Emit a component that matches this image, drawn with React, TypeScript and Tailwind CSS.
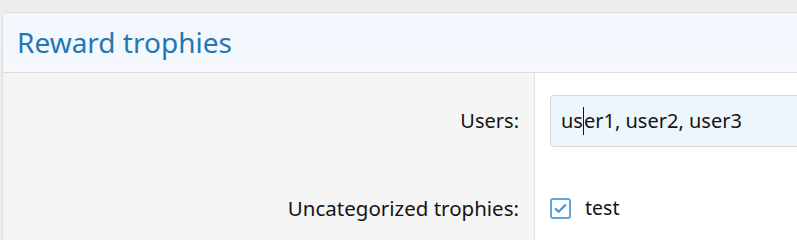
import React from 'react';

export default function App() {
  return (
    <div className="h-[240px] w-[797px] overflow-hidden bg-[#eeeeee] pt-3 pl-[2px] font-['Noto_Sans',sans-serif]">
      <div className="w-[820px] h-[260px] rounded-tl-[4px] border border-[#dcdcdc] bg-white overflow-hidden flex flex-col">
        <div className="h-[60px] shrink-0 border-b border-[#dcdcdc] bg-gradient-to-b from-[#f0f7fd] to-[#f5f9fd] px-[14px] flex items-center">
          <h2 className="text-[28px] text-[#2577b1] leading-none pb-[2px]">Reward trophies</h2>
        </div>
        <div className="flex-1 flex flex-col text-[#141414]">
          <div className="flex">
            <div className="w-[532px] shrink-0 bg-[#f5f5f5] border-r border-[#e2e2e2] pt-[22px] pb-[10px] pr-[15px]">
              <div className="h-[52px] flex items-center justify-end text-[20px]">Users:</div>
            </div>
            <div className="flex-1 pl-[15px] pt-[22px] pb-[10px]">
              <div className="h-[52px] rounded-[4px] border border-[#d8d8d8] bg-[#edf5fd] flex items-center pl-[10px] text-[20px]">
                <span>us</span>
                <span className="inline-block w-px h-[28px] bg-[#141414]"></span>
                <span>er1, user2, user3</span>
              </div>
            </div>
          </div>
          <div className="flex flex-1">
            <div className="w-[532px] shrink-0 bg-[#f5f5f5] border-r border-[#e2e2e2] pt-[38px] pr-[15px]">
              <div className="h-[26px] flex items-center justify-end text-[20.5px]">Uncategorized trophies:</div>
            </div>
            <div className="flex-1 pl-[15px] pt-[38px]">
              <div className="h-[26px] flex items-center gap-[14px] text-[19.5px]">
                <span className="w-[21px] h-[21px] rounded-[3px] border-2 border-[#5ea6d8] bg-white flex items-center justify-center">
                  <svg viewBox="0 0 16 16" className="w-[15px] h-[15px]">
                    <path d="M3 8.5l3 3 7-7" fill="none" stroke="#4792c9" strokeWidth="2.4" strokeLinecap="round" strokeLinejoin="round" />
                  </svg>
                </span>
                <span>test</span>
              </div>
            </div>
          </div>
        </div>
      </div>
    </div>
  );
}
